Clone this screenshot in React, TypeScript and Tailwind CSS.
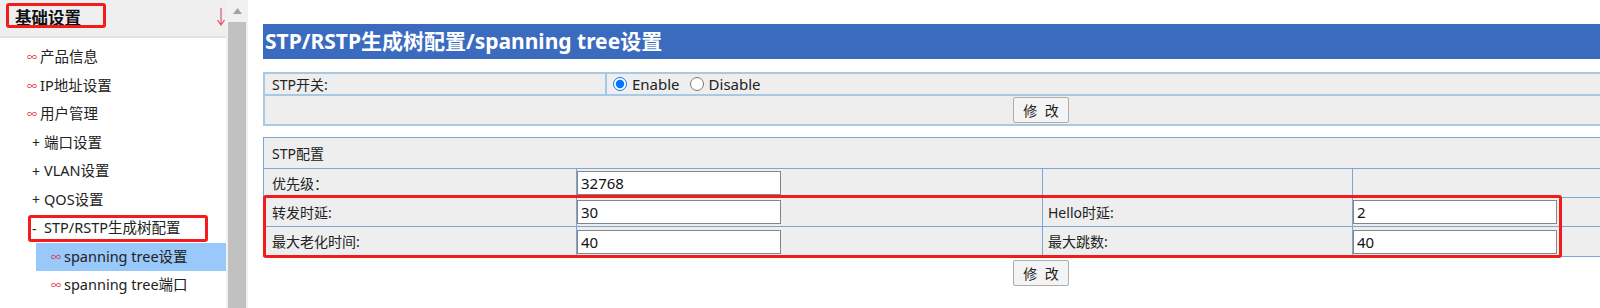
import React from "react";

type MenuItem = {
  mark: "∞" | "+" | "-";
  label: string;
  child?: boolean;
  active?: boolean;
  boxed?: boolean;
};

const menu: MenuItem[] = [
  { mark: "∞", label: "产品信息" },
  { mark: "∞", label: "IP地址设置" },
  { mark: "∞", label: "用户管理" },
  { mark: "+", label: "端口设置" },
  { mark: "+", label: "VLAN设置" },
  { mark: "+", label: "QOS设置" },
  { mark: "-", label: "STP/RSTP生成树配置", boxed: true },
  { mark: "∞", label: "spanning tree设置", child: true, active: true },
  { mark: "∞", label: "spanning tree端口", child: true },
];

function Inf() {
  return (
    <span className="w-[13px] text-[10px] leading-none text-[#e8283c]">∞</span>
  );
}

function MenuRow({ item }: { item: MenuItem }) {
  if (item.child) {
    return (
      <li className="flex h-[28.5px] pl-[36px]">
        <div
          className={`flex flex-1 items-center pl-[15px] ${
            item.active ? "bg-[#99c8fa]" : ""
          }`}
        >
          <Inf />
          <span>{item.label}</span>
        </div>
      </li>
    );
  }
  const leaf = item.mark === "∞";
  return (
    <li
      className={`relative flex h-[28.5px] items-center ${
        leaf ? "pl-[27px]" : "pl-[32px]"
      }`}
    >
      {leaf ? <Inf /> : <span className="w-[12px] text-[14px]">{item.mark}</span>}
      <span>{item.label}</span>
      {item.boxed && (
        <div className="absolute left-[28px] top-[1px] h-[27px] w-[180px] rounded-[3px] border-[3px] border-[#f21c1c]" />
      )}
    </li>
  );
}

function Btn() {
  return (
    <button className="h-[26px] w-[56px] rounded-[2px] border border-[#adadad] bg-[#f4f4f4] text-[14px] text-[#222]">
      修&nbsp;&nbsp;改
    </button>
  );
}

function TextBox({ value }: { value: string }) {
  return (
    <input
      defaultValue={value}
      className="h-[24px] w-[204px] border border-[#858585] bg-white pl-[3px] text-[15px] text-[#111] outline-none"
    />
  );
}

export default function App() {
  return (
    <div className="flex h-[308px] w-[1600px] overflow-hidden bg-white font-['Noto_Sans','Noto_Sans_CJK_SC',sans-serif] text-[14px] text-[#222]">
      <aside className="w-[226px] shrink-0 text-[14.5px]">
        <div className="relative flex h-[38px] items-center border-b-2 border-[#e2e2e2] bg-[#efefef] pl-[15px]">
          <span className="text-[16.5px] font-bold text-[#111]">基础设置</span>
          <div className="absolute left-[6px] top-[3px] h-[25px] w-[100px] rounded-[3px] border-[3px] border-[#f21c1c]" />
          <svg
            className="absolute left-[216px] top-[8px]"
            width="10"
            height="18"
            viewBox="0 0 10 18"
          >
            <path
              d="M5 0 V16.5 M1.5 12 L5 17 L8.5 12"
              fill="none"
              stroke="#e8506a"
              strokeWidth="1.2"
            />
          </svg>
        </div>
        <ul className="pt-[5px]">
          {menu.map((m) => (
            <MenuRow key={m.label} item={m} />
          ))}
        </ul>
      </aside>

      <div className="flex w-[22px] shrink-0 flex-col bg-[#f1f1f1]">
        <div className="flex h-[22px] items-center justify-center">
          <svg width="9" height="6" viewBox="0 0 9 6">
            <polygon points="4.5,0 9,6 0,6" fill="#a3a3a3" />
          </svg>
        </div>
        <div className="mx-[2px] flex-1 bg-[#c1c1c1]" />
      </div>

      <main className="min-w-0 flex-1 overflow-hidden pl-[15px] pt-[24px]">
        <div className="w-[1556px]">
          <div className="flex h-[35px] items-center bg-[#3b6bbf] pl-[2px] text-[21px] font-bold text-white">
            STP/RSTP生成树配置/spanning tree设置
          </div>

          <div className="mt-[13px] border-2 border-[#a9c8e2] bg-[#eeeeee]">
            <div className="flex h-[22px] border-b-2 border-[#a9c8e2]">
              <div className="flex w-[342px] items-center border-r-2 border-[#a9c8e2] pl-[7px]">
                STP开关:
              </div>
              <div className="flex items-center pl-[6px] text-[15px]">
                <label className="flex items-center gap-[5px]">
                  <input
                    type="radio"
                    name="stp"
                    defaultChecked
                    className="m-0 h-[14px] w-[14px]"
                  />
                  Enable
                </label>
                <label className="ml-[10px] flex items-center gap-[5px]">
                  <input type="radio" name="stp" className="m-0 h-[14px] w-[14px]" />
                  Disable
                </label>
              </div>
            </div>
            <div className="flex h-[28px] items-center justify-center">
              <Btn />
            </div>
          </div>

          <div className="relative mt-[11px] border border-[#7aa7d6] bg-[#eeeeee]">
            <div className="flex h-[31px] items-center border-b border-[#7aa7d6] pl-[8px]">
              STP配置
            </div>
            {[
              ["优先级：", "32768", "", ""],
              ["转发时延:", "30", "Hello时延:", "2"],
              ["最大老化时间:", "40", "最大跳数:", "40"],
            ].map((r, i) => (
              <div
                key={r[0]}
                className={`flex h-[29px] ${i < 2 ? "border-b border-[#7aa7d6]" : ""}`}
              >
                <div className="flex w-[313px] items-center border-r border-[#7aa7d6] pl-[8px]">
                  {r[0]}
                </div>
                <div className="flex w-[466px] items-center border-r border-[#7aa7d6]">
                  <TextBox value={r[1]} />
                </div>
                <div className="flex w-[310px] items-center border-r border-[#7aa7d6] pl-[5px]">
                  {r[2]}
                </div>
                <div className="flex flex-1 items-center">
                  {r[3] && <TextBox value={r[3]} />}
                </div>
              </div>
            ))}
            <div className="absolute left-[-1px] top-[57px] h-[63px] w-[1299px] rounded-[3px] border-[3px] border-[#f21c1c]" />
          </div>

          <div className="mt-[3px] flex justify-center">
            <Btn />
          </div>
        </div>
      </main>
    </div>
  );
}
